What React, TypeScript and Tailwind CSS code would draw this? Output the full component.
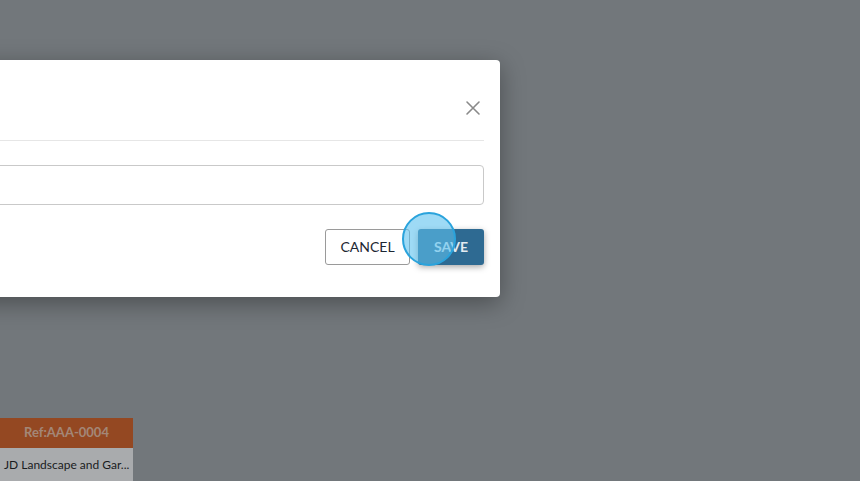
import React from 'react';

const font = { fontFamily: 'Lato, "Open Sans", sans-serif' };

const CloseIcon = () => (
  <svg width="16" height="16" viewBox="0 0 16 16" fill="none" stroke="#8a8a8a" strokeWidth="1.6" strokeLinecap="round">
    <path d="M2 2 L14 14 M14 2 L2 14" />
  </svg>
);

export default function App() {
  return (
    <div className="relative h-[481px] w-[860px] overflow-hidden bg-[#a3a8ac]" style={font}>
      {/* page behind the overlay */}
      <div className="flex h-full flex-col justify-end">
        <div className="w-[133px]">
          <div className="flex h-[30px] items-center justify-center bg-[#dc5a18] text-[13px] font-bold text-[#f5c3a6]">
            Ref:AAA-0004
          </div>
          <div className="flex h-[33px] items-center bg-white pl-[4px] text-[12px] text-[#111]">
            JD Landscape and Gar...
          </div>
        </div>
      </div>

      {/* overlay */}
      <div className="absolute inset-0 bg-[rgba(40,45,50,0.4)]" />

      {/* modal */}
      <div className="absolute left-[-100px] top-[60px] flex h-[237px] w-[600px] flex-col rounded-[4px] bg-white pr-[16px] shadow-[0_6px_24px_rgba(0,0,0,0.35)]">
        <div className="flex h-[81px] items-end justify-end border-b border-[#e6e6e6] pb-[24px] pr-[3px]">
          <CloseIcon />
        </div>
        <div className="mt-[24px] h-[40px] rounded-[4px] border border-[#c9c9c9]" />
        <div className="mt-[24px] flex justify-end gap-[8px]">
          <button className="h-[36px] w-[85px] rounded-[3px] border border-[#9a9a9a] bg-white pb-[2px] text-[14px] font-normal text-[#1d2733]">
            CANCEL
          </button>
          <div className="relative">
            <button className="h-[36px] w-[66px] rounded-[3px] bg-[#2e6a92] pb-[2px] text-[14px] font-bold text-[#e3ebf1] shadow-[0_2px_6px_rgba(0,0,0,0.35)]">
              SAVE
            </button>
            <div className="absolute left-[-16px] top-[-17px] h-[54px] w-[54px] rounded-full border-2 border-[#2aa3dc] bg-[#5ec2ef]/60" />
          </div>
        </div>
      </div>
    </div>
  );
}
